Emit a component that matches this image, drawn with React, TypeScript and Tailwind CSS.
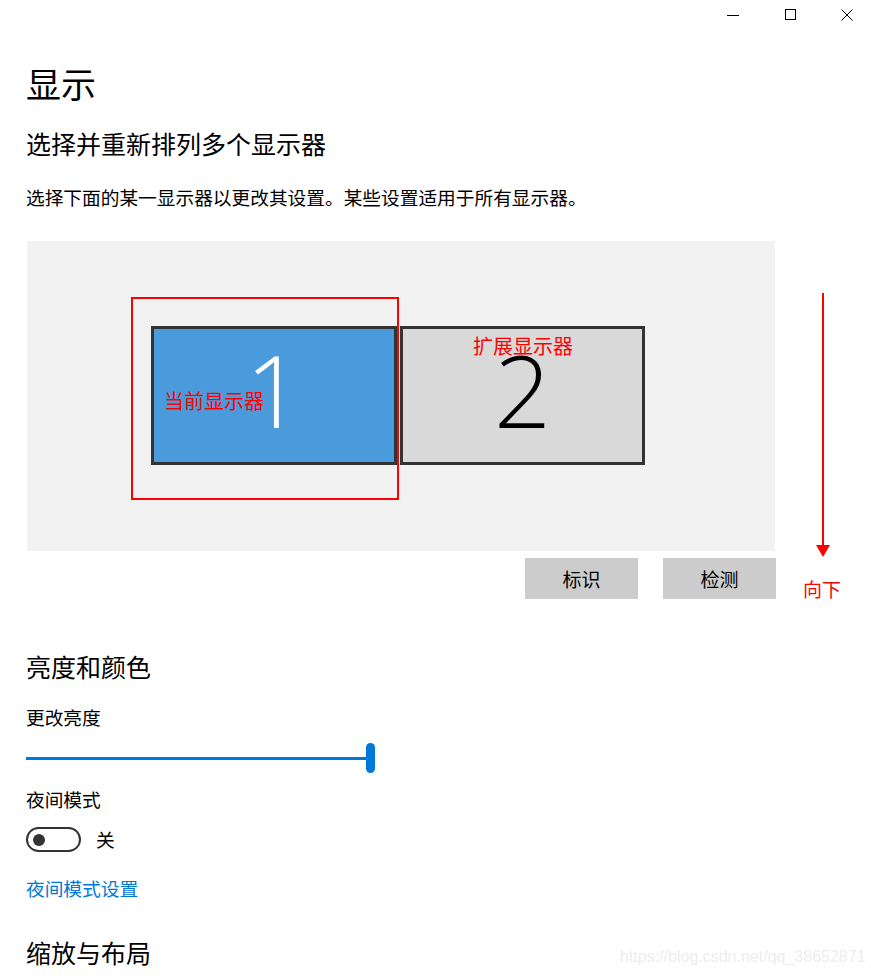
import React from "react";

const cjk = { fontFamily: '"Noto Sans CJK SC", "Noto Sans", sans-serif' };

export default function App() {
  return (
    <div className="relative w-[871px] h-[978px] overflow-hidden bg-white text-black" style={cjk}>
      {/* title bar */}
      <div className="flex h-[30px] items-center justify-end pr-[18px]">
        <svg width="12" height="12" viewBox="0 0 12 12" className="mr-[46px]">
          <line x1="0" y1="6.5" x2="12" y2="6.5" stroke="#000" strokeWidth="1" />
        </svg>
        <svg width="12" height="12" viewBox="0 0 12 12" className="mr-[44px]">
          <rect x="0.5" y="0.5" width="10" height="10" fill="none" stroke="#000" strokeWidth="1" />
        </svg>
        <svg width="12" height="12" viewBox="0 0 12 12">
          <line x1="0.5" y1="0.5" x2="11.5" y2="11.5" stroke="#000" strokeWidth="1" />
          <line x1="11.5" y1="0.5" x2="0.5" y2="11.5" stroke="#000" strokeWidth="1" />
        </svg>
      </div>

      <div className="flex flex-col px-[26px]">
        <div className="mt-[35px] text-[35px] leading-none">显示</div>
        <div className="mt-[31px] text-[25px] leading-none">选择并重新排列多个显示器</div>
        <div className="mt-[32px] text-[18.7px] leading-none">
          选择下面的某一显示器以更改其设置。某些设置适用于所有显示器。
        </div>

        {/* monitors panel */}
        <div className="relative ml-[1px] mt-[34px] h-[310px] w-[748px] bg-[#f2f2f2]">
          <div className="absolute left-[124px] top-[85px] flex h-[139px] w-[246px] items-center justify-center border-[3px] border-[#333333] bg-[#4a9bdc]">
            <span
              className="mb-[13px] text-[100px] font-light leading-none text-white"
              style={{ fontFamily: '"Open Sans", sans-serif' }}
            >
              1
            </span>
          </div>
          <div className="absolute left-[373px] top-[85px] flex h-[139px] w-[245px] items-center justify-center border-[3px] border-[#333333] bg-[#d9d9d9]">
            <span
              className="mb-[12px] text-[100px] font-light leading-none text-black"
              style={{ fontFamily: '"Open Sans", sans-serif' }}
            >
              2
            </span>
          </div>
          <div className="absolute left-[104px] top-[56px] h-[203px] w-[268px] border-2 border-[#ff0000]" />
          <div className="absolute left-[137px] top-[150px] text-[20px] leading-none text-[#ff0000]">当前显示器</div>
          <div className="absolute left-[446px] top-[95px] text-[20px] leading-none text-[#ff0000]">扩展显示器</div>
        </div>

        {/* buttons */}
        <div className="mt-[7px] flex w-[750px] justify-end gap-[25px]">
          <div className="flex h-[41px] w-[113px] items-center justify-center bg-[#cccccc] text-[19px] leading-none">标识</div>
          <div className="flex h-[41px] w-[113px] items-center justify-center bg-[#cccccc] text-[19px] leading-none">检测</div>
        </div>

        <div className="mt-[55px] text-[25px] leading-none">亮度和颜色</div>
        <div className="mt-[29px] text-[18.7px] leading-none">更改亮度</div>

        {/* slider */}
        <div className="mt-[17px] flex h-[30px] w-[350px] items-center">
          <div className="h-[3px] w-[340px] bg-[#0078d7]" />
          <div className="h-[30px] w-[9px] rounded-full bg-[#0078d7]" />
        </div>

        <div className="mt-[17px] text-[18.7px] leading-none">夜间模式</div>
        <div className="mt-[18px] flex items-center gap-[15px]">
          <div className="flex h-[25px] w-[55px] items-center rounded-full border-2 border-[#333333] pl-[5px]">
            <div className="h-[12px] w-[12px] rounded-full bg-[#333333]" />
          </div>
          <span className="text-[18.7px] leading-none">关</span>
        </div>

        <div className="mt-[27px] text-[18.7px] leading-none text-[#0078d7]">夜间模式设置</div>
        <div className="mt-[42px] text-[25px] leading-none">缩放与布局</div>
      </div>

      {/* annotation arrow */}
      <div className="absolute left-[816px] top-[293px] flex w-[14px] flex-col items-center">
        <div className="h-[252px] w-[2px] bg-[#ff0000]" />
        <svg width="14" height="12" viewBox="0 0 14 12">
          <polygon points="0,0 14,0 7,12" fill="#ff0000" />
        </svg>
      </div>
      <div className="absolute left-[803px] top-[579px] text-[19px] leading-none text-[#ff0000]">向下</div>

      {/* watermark */}
      <div
        className="absolute left-[620px] top-[949px] text-[16px] leading-none text-[#ededed]"
        style={{ fontFamily: '"Liberation Sans", Arial, sans-serif' }}
      >
        https://blog.csdn.net/qq_38652871
      </div>
    </div>
  );
}
